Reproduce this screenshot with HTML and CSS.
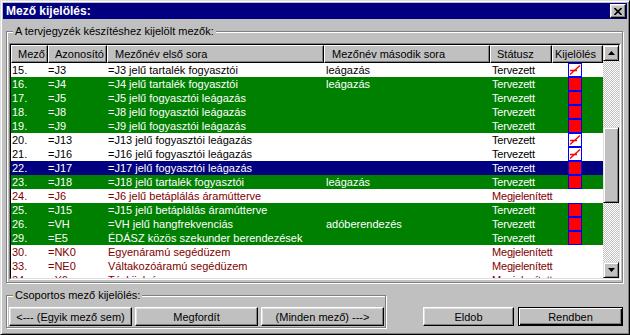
FILE: index.html
```html
<!DOCTYPE html>
<html lang="hu">
<head>
<meta charset="utf-8">
<title>Mező kijelölés</title>
<link rel="stylesheet" href="styles.css">
</head>
<body>
<div class="win">
  <div class="titlebar">
    <span class="title">Mező kijelölés:</span>
    <button class="close" aria-label="Bezár"><svg width="8" height="7" viewBox="0 0 8 7"><path d="M0.5 0 L7.5 7 M7.5 0 L0.5 7" stroke="#000" stroke-width="1.6" fill="none"/></svg></button>
  </div>
  <div class="body">
    <div class="group main">
      <span class="legend">A tervjegyzék készítéshez kijelölt mezők:</span>
      <div class="listbox">
        <div class="listin">
          <div class="list">
            <div class="hdr">
              <div class="hc c1">Mező</div>
              <div class="hc c2">Azonosító</div>
              <div class="hc c3">Mezőnév első sora</div>
              <div class="hc c4">Mezőnév második sora</div>
              <div class="hc c5">Státusz</div>
              <div class="hc c6 hk">Kijelölés</div>
            </div>
            <div class="rows">
              <div class="row"><span class="c1">15.</span><span class="c2">=J3</span><span class="c3">=J3 jelű tartalék fogyasztói</span><span class="c4">leágazás</span><span class="c5">Tervezett</span><span class="c6"><span class="cb off"><svg width="12" height="12" viewBox="0 0 12 12"><path d="M1 10.5 L11 1.5 M1 6.5 L8 6.5" stroke="#f00" stroke-width="1.4" fill="none"/></svg></span></span></div>
              <div class="row g"><span class="c1">16.</span><span class="c2">=J4</span><span class="c3">=J4 jelű tartalék fogyasztói</span><span class="c4">leágazás</span><span class="c5">Tervezett</span><span class="c6"><span class="cb"></span></span></div>
              <div class="row g"><span class="c1">17.</span><span class="c2">=J5</span><span class="c3">=J5 jelű fogyasztói leágazás</span><span class="c4"></span><span class="c5">Tervezett</span><span class="c6"><span class="cb"></span></span></div>
              <div class="row g"><span class="c1">18.</span><span class="c2">=J8</span><span class="c3">=J8 jelű fogyasztói leágazás</span><span class="c4"></span><span class="c5">Tervezett</span><span class="c6"><span class="cb"></span></span></div>
              <div class="row g"><span class="c1">19.</span><span class="c2">=J9</span><span class="c3">=J9 jelű fogyasztói leágazás</span><span class="c4"></span><span class="c5">Tervezett</span><span class="c6"><span class="cb"></span></span></div>
              <div class="row"><span class="c1">20.</span><span class="c2">=J13</span><span class="c3">=J13 jelű fogyasztói leágazás</span><span class="c4"></span><span class="c5">Tervezett</span><span class="c6"><span class="cb off"><svg width="12" height="12" viewBox="0 0 12 12"><path d="M1 10.5 L11 1.5 M1 6.5 L8 6.5" stroke="#f00" stroke-width="1.4" fill="none"/></svg></span></span></div>
              <div class="row"><span class="c1">21.</span><span class="c2">=J16</span><span class="c3">=J16 jelű fogyasztói leágazás</span><span class="c4"></span><span class="c5">Tervezett</span><span class="c6"><span class="cb off"><svg width="12" height="12" viewBox="0 0 12 12"><path d="M1 10.5 L11 1.5 M1 6.5 L8 6.5" stroke="#f00" stroke-width="1.4" fill="none"/></svg></span></span></div>
              <div class="row sel"><span class="c1">22.</span><span class="c2">=J17</span><span class="c3">=J17 jelű fogyasztói leágazás</span><span class="c4"></span><span class="c5">Tervezett</span><span class="c6"><span class="cb"></span></span></div>
              <div class="row g"><span class="c1">23.</span><span class="c2">=J18</span><span class="c3">=J18 jelű tartalék fogyasztói</span><span class="c4">leágazás</span><span class="c5">Tervezett</span><span class="c6"><span class="cb"></span></span></div>
              <div class="row m"><span class="c1">24.</span><span class="c2">=J6</span><span class="c3">=J6 jelű betáplálás áramútterve</span><span class="c4"></span><span class="c5">Megjelenített</span><span class="c6"></span></div>
              <div class="row g"><span class="c1">25.</span><span class="c2">=J15</span><span class="c3">=J15 jelű betáplálás áramútterve</span><span class="c4"></span><span class="c5">Tervezett</span><span class="c6"><span class="cb"></span></span></div>
              <div class="row g"><span class="c1">26.</span><span class="c2">=VH</span><span class="c3">=VH jelű hangfrekvenciás</span><span class="c4">adóberendezés</span><span class="c5">Tervezett</span><span class="c6"><span class="cb"></span></span></div>
              <div class="row g"><span class="c1">29.</span><span class="c2">=E5</span><span class="c3">ÉDÁSZ közös szekunder berendezések</span><span class="c4"></span><span class="c5">Tervezett</span><span class="c6"><span class="cb"></span></span></div>
              <div class="row m"><span class="c1">30.</span><span class="c2">=NK0</span><span class="c3">Egyenáramú segédüzem</span><span class="c4"></span><span class="c5">Megjelenített</span><span class="c6"></span></div>
              <div class="row m"><span class="c1">33.</span><span class="c2">=NE0</span><span class="c3">Váltakozóáramú segédüzem</span><span class="c4"></span><span class="c5">Megjelenített</span><span class="c6"></span></div>
              <div class="row m"><span class="c1">34.</span><span class="c2">=X0</span><span class="c3">Távkijelzés</span><span class="c4"></span><span class="c5">Megjelenített</span><span class="c6"></span></div>
            </div>
          </div>
          <div class="vscroll">
            <div class="sbtn"><svg width="7" height="4" viewBox="0 0 7 4"><path d="M3.5 0 L7 4 L0 4 Z" fill="#000"/></svg></div>
            <div class="track-top"></div>
            <div class="thumb"></div>
            <div class="track-bot"></div>
            <div class="sbtn"><svg width="7" height="4" viewBox="0 0 7 4"><path d="M0 0 L7 0 L3.5 4 Z" fill="#000"/></svg></div>
          </div>
        </div>
      </div>
    </div>
    <div class="bottom">
      <div class="group grp2">
        <span class="legend">Csoportos mező kijelölés:</span>
        <button class="btn wide">&lt;--- (Egyik mező sem)</button>
        <button class="btn wide">Megfordít</button>
        <button class="btn wide">(Minden mező) ---&gt;</button>
      </div>
      <div class="actions">
        <button class="btn eldob">Eldob</button>
        <button class="btn rendben">Rendben</button>
      </div>
    </div>
  </div>
</div>
</body>
</html>
```
FILE: styles.css
```css
* { box-sizing: border-box; }
body {
  margin: 0;
  background: #c0c0c0;
  font: 11px "Liberation Sans", Arial, sans-serif;
  color: #000;
}
.win {
  width: 630px;
  height: 335px;
  border: 1px solid;
  border-color: #dfdfdf #000 #000 #dfdfdf;
  box-shadow: inset 1px 1px #fff, inset -1px -1px #808080;
  padding: 2px;
  background: #c0c0c0;
  overflow: hidden;
}
.titlebar {
  height: 16px;
  background: #000080;
  color: #fff;
  display: flex;
  align-items: center;
  justify-content: space-between;
  padding: 0 1px 0 3px;
}
.title { font-weight: bold; font-size: 12px; }
.close {
  width: 16px;
  height: 14px;
  padding: 0;
  background: #c0c0c0;
  border: 1px solid;
  border-color: #fff #000 #000 #fff;
  box-shadow: inset -1px -1px #808080, inset 1px 1px #dfdfdf;
  display: flex;
  align-items: center;
  justify-content: center;
}
.body { padding: 12px 4px 0 3px; }
.group {
  position: relative;
  border: 1px solid #808080;
  box-shadow: inset 1px 1px #fff, 1px 1px #fff;
}
.legend {
  position: absolute;
  top: -7px;
  left: 6px;
  padding: 0 2px;
  background: #c0c0c0;
  line-height: 13px;
  white-space: nowrap;
}
.main { padding: 11px 1px 2px 2px; }
.listbox {
  height: 237px;
  border: 1px solid;
  border-color: #808080 #fff #fff #808080;
}
.listin {
  height: 100%;
  border: 1px solid;
  border-color: #000 #dfdfdf #dfdfdf #000;
  background: #fff;
  display: flex;
}
.list {
  flex: 1;
  min-width: 0;
  overflow: hidden;
  display: flex;
  flex-direction: column;
}
.hdr {
  display: flex;
  height: 18px;
  flex: none;
  background: #c0c0c0;
}
.hc {
  height: 18px;
  line-height: 16px;
  padding-left: 6px;
  border-top: 1px solid #fff;
  border-left: 1px solid #fff;
  border-right: 1px solid #000;
  border-bottom: 1px solid #000;
  box-shadow: inset -1px -1px #808080;
  white-space: nowrap;
  overflow: hidden;
}
.hc.c3, .hc.c4 { padding-left: 7px; }
.hc.hk { padding-left: 2px; }
.c1 { width: 37px; flex: none; }
.c2 { width: 59px; flex: none; }
.c3 { width: 217px; flex: none; }
.c4 { width: 166px; flex: none; }
.c5 { width: 62px; flex: none; }
.c6 { flex: 1; }
.rows { flex: 1; overflow: hidden; }
.row {
  display: flex;
  height: 14px;
  line-height: 14px;
  white-space: nowrap;
}
.row > span { display: block; }
.row .c1 { padding-left: 1px; }
.row .c2 { padding-left: 0; }
.row .c3 { padding-left: 1px; }
.row .c4, .row .c5 { padding-left: 2px; }
.row .c5 { letter-spacing: -0.2px; }
.row.g { background: #008000; color: #fff; }
.row.sel { background: #000080; color: #fff; }
.row.m { color: #800000; }
.cb {
  display: block;
  width: 14px;
  height: 14px;
  margin-left: 16px;
  border: 1px solid #0000ff;
  background: #ff0000;
}
.cb.off { background: #fff; }
.cb svg { display: block; }
.vscroll {
  width: 16px;
  flex: none;
  display: flex;
  flex-direction: column;
  background: repeating-conic-gradient(#c0c0c0 0 25%, #fff 0 50%) 0 0 / 2px 2px;
}
.sbtn, .thumb {
  background: #c0c0c0;
  border: 1px solid;
  border-color: #dfdfdf #000 #000 #dfdfdf;
  box-shadow: inset 1px 1px #fff, inset -1px -1px #808080;
}
.sbtn {
  height: 16px;
  flex: none;
  display: flex;
  align-items: center;
  justify-content: center;
}
.track-top { height: 66px; flex: none; }
.thumb { height: 76px; flex: none; }
.track-bot { flex: 1; }
.bottom {
  display: flex;
  align-items: flex-start;
  margin-top: 12px;
}
.grp2 {
  display: flex;
  gap: 3px;
  padding: 11px 1px 1px 2px;
}
.btn {
  height: 19px;
  padding: 0;
  font: inherit;
  color: #000;
  background: #c0c0c0;
  border: 1px solid;
  border-color: #fff #000 #000 #fff;
  box-shadow: inset -1px -1px #808080, inset 1px 1px #dfdfdf;
}
.btn.wide { width: 123px; }
.actions {
  margin-left: auto;
  margin-top: 12px;
  display: flex;
  gap: 4px;
}
.btn.eldob { width: 91px; }
.btn.rendben {
  width: 105px;
  border-color: #000;
  box-shadow: inset 1px 1px #fff, inset -1px -1px #000, inset -2px -2px #808080;
}
```
